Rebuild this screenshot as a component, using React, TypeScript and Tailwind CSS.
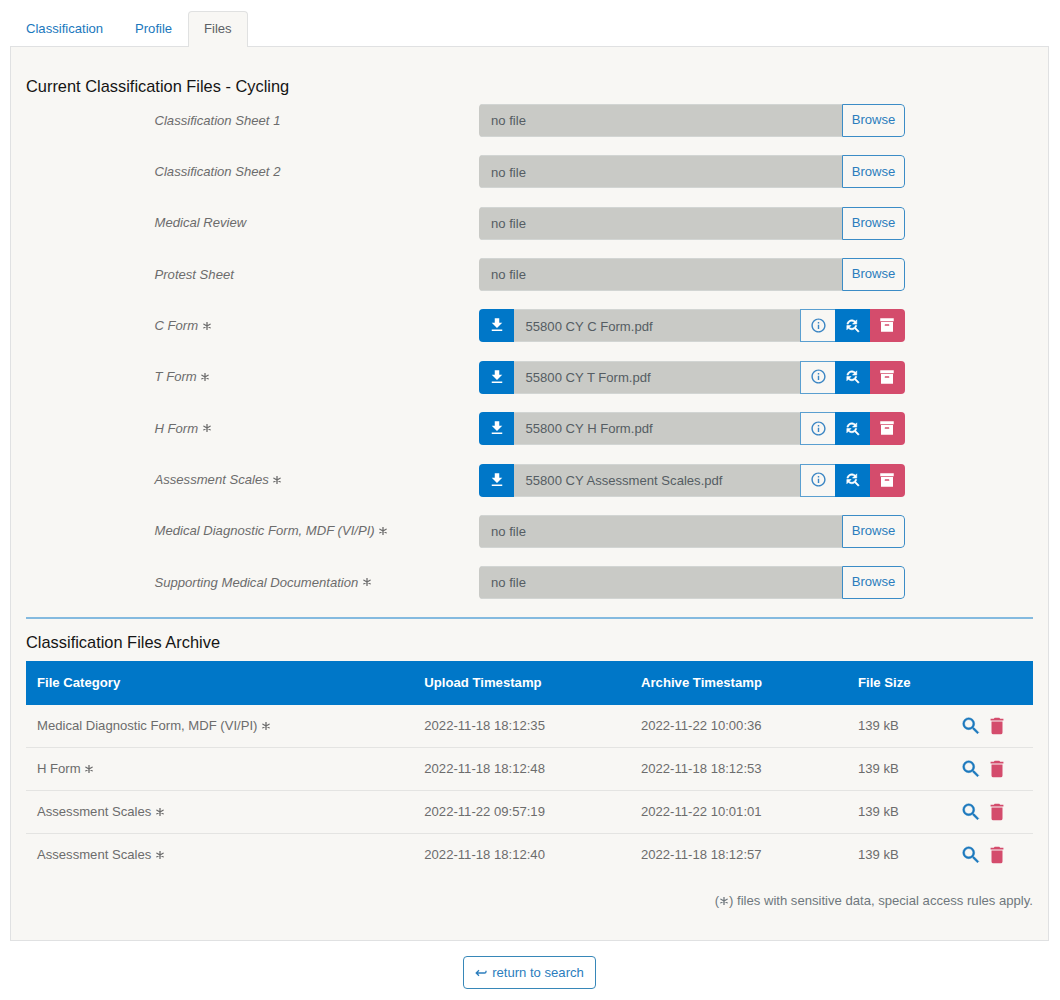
import React from "react";

const paths = {
  download: "M5 20h14v-2H5v2zM19 9h-4V3H9v6H5l7 7 7-7z",
  info: "M11 7h2v2h-2V7zm0 4h2v6h-2v-6zm1-9C6.48 2 2 6.48 2 12s4.48 10 10 10 10-4.48 10-10S17.52 2 12 2zm0 18c-4.41 0-8-3.59-8-8s3.59-8 8-8 8 3.59 8 8-3.59 8-8 8z",
  replace:
    "M11 6c1.38 0 2.63.56 3.54 1.46L12 10h6V4l-2.05 2.05C14.68 4.78 12.93 4 11 4c-3.53 0-6.43 2.61-6.92 6H6.1c.46-2.28 2.48-4 4.9-4zm5.64 9.14c.66-.9 1.12-1.97 1.28-3.14H15.9c-.46 2.28-2.48 4-4.9 4-1.38 0-2.63-.56-3.54-1.46L10 12H4v6l2.05-2.05C7.32 17.22 9.07 18 11 18c1.55 0 2.98-.51 4.14-1.36L20 21.49 21.49 20l-4.85-4.86z",
  archive:
    "M3 3h18v4H3V3zm1 5h16v13H4V8zm5.500 3a.5.5 0 0 0-.5.5V13h6v-1.500a.5.5 0 0 0-.5-.5h-5z",
  search:
    "M9.500 3A6.500 6.500 0 0 1 16 9.500c0 1.610-.59 3.090-1.560 4.230l.27.27h.79l5 5-1.500 1.500-5-5v-.79l-.27-.27A6.516 6.516 0 0 1 9.500 16 6.500 6.500 0 0 1 3 9.500 6.500 6.500 0 0 1 9.500 3m0 2C7 5 5 7 5 9.500S7 14 9.500 14 14 12 14 9.500 12 5 9.500 5z",
  trash: "M19 4h-3.500l-1-1h-5l-1 1H5v2h14M6 19a2 2 0 0 0 2 2h8a2 2 0 0 0 2-2V7H6v12z",
};

function Icon({ name, className }: { name: keyof typeof paths; className: string }) {
  return (
    <svg viewBox="0 0 24 24" fill="currentColor" className={className}>
      <path d={paths[name]} />
    </svg>
  );
}

function Star({ className = "ml-[4.500px]" }: { className?: string }) {
  return (
    <svg
      viewBox="0 0 8 8"
      className={`inline-block h-2 w-2 align-[0.500px] ${className}`}
      stroke="currentColor"
      strokeWidth="1.300"
      strokeLinecap="round"
    >
      <path d="M4 .4v7.200M.9 2.200l6.200 3.600M7.100 2.200.9 5.800" />
    </svg>
  );
}

const files: { label: string; sensitive?: boolean; file?: string }[] = [
  { label: "Classification Sheet 1" },
  { label: "Classification Sheet 2" },
  { label: "Medical Review" },
  { label: "Protest Sheet" },
  { label: "C Form", sensitive: true, file: "55800 CY C Form.pdf" },
  { label: "T Form", sensitive: true, file: "55800 CY T Form.pdf" },
  { label: "H Form", sensitive: true, file: "55800 CY H Form.pdf" },
  { label: "Assessment Scales", sensitive: true, file: "55800 CY Assessment Scales.pdf" },
  { label: "Medical Diagnostic Form, MDF (VI/PI)", sensitive: true },
  { label: "Supporting Medical Documentation", sensitive: true },
];

const archive = [
  ["Medical Diagnostic Form, MDF (VI/PI)", "2022-11-18 18:12:35", "2022-11-22 10:00:36", "139 kB"],
  ["H Form", "2022-11-18 18:12:48", "2022-11-18 18:12:53", "139 kB"],
  ["Assessment Scales", "2022-11-22 09:57:19", "2022-11-22 10:01:01", "139 kB"],
  ["Assessment Scales", "2022-11-18 18:12:40", "2022-11-18 18:12:57", "139 kB"],
];

const columns = "grid grid-cols-[387.300px_216.700px_217px_102px_1fr] items-center pl-[11px]";

function FileRow({ label, sensitive, file }: (typeof files)[number]) {
  return (
    <div className="flex h-[51.360px] items-start pl-[128.500px]">
      <div className="w-[324.500px] pt-[6.600px] text-[13.100px] italic leading-5 text-[#6c6c6c]">
        {label}
        {sensitive && <Star />}
      </div>
      <div className="flex h-[33px] w-[426px] overflow-hidden rounded">
        {file && (
          <button className="flex w-[35px] items-center justify-center bg-[#0077c8] pb-px text-white">
            <Icon name="download" className="h-[18px] w-[18px]" />
          </button>
        )}
        <div
          className={`flex flex-1 items-center border-y border-[#d2d5d3] bg-[#c9cac6] pt-px text-[13.100px] text-[#555d63] ${file ? "pl-[11.500px]" : "pl-3"}`}
        >
          {file ?? "no file"}
        </div>
        {file ? (
          <>
            <button className="flex w-[35px] items-center justify-center border border-r-0 border-[#5a9fd0] pb-px text-[#3b86c4]">
              <Icon name="info" className="h-[17px] w-[17px]" />
            </button>
            <button className="flex w-[35px] items-center justify-center bg-[#0077c8] pb-px text-white">
              <Icon
                name="replace"
                className="h-[17px] w-[17px] stroke-current stroke-[0.8px]"
              />
            </button>
            <button className="flex w-[35px] items-center justify-center bg-[#d44c6c] pb-px pr-px text-white">
              <Icon name="archive" className="h-[18px] w-[18px]" />
            </button>
          </>
        ) : (
          <button className="flex w-[63px] items-center justify-center rounded-r border border-[#3b8cc6] pb-px text-[13.100px] text-[#2b7dbd]">
            Browse
          </button>
        )}
      </div>
    </div>
  );
}

export default function App() {
  return (
    <div className="h-[1000px] overflow-hidden bg-white px-[10px] pt-[11px] font-['Liberation_Sans',Arial,sans-serif] text-[13.100px] text-[#6c6c6c]">
      <nav className="relative z-10 flex h-9 text-[#1b78bd]">
        <a className="w-[109px] pl-4 pt-2 leading-5">Classification</a>
        <a className="w-[69px] pl-4 pt-2 leading-5">Profile</a>
        <a className="h-9 w-[60px] rounded-t border border-b-0 border-[#e0e1e1] bg-[#f8f7f4] pl-[15px] pt-[7px] leading-5 text-[#5c6166]">
          Files
        </a>
      </nav>
      <main className="-mt-px h-[895px] w-[1039px] border border-[#e0e1e2] bg-[#f8f7f4] px-[15px]">
        <h2 className="h-[57px] pt-[27px] text-[16.400px] leading-6 text-[#151515]">
          Current Classification Files - Cycling
        </h2>
        <section className="h-[513px]">
          {files.map((f) => (
            <FileRow key={f.label} {...f} />
          ))}
        </section>
        <hr className="h-[2px] border-0 bg-[#84badf]" />
        <h2 className="h-[42px] pt-[11px] text-[16.400px] leading-6 text-[#151515]">
          Classification Files Archive
        </h2>
        <div>
          <div className={`${columns} h-[44px] bg-[#0077c8] pb-px text-[13.150px] font-bold text-white`}>
            <span>File Category</span>
            <span>Upload Timestamp</span>
            <span>Archive Timestamp</span>
            <span>File Size</span>
          </div>
          {archive.map((row, i) => (
            <div
              key={i}
              className={`${columns} h-[43px] border-b ${i < 3 ? "border-[#e4e4e2]" : "border-transparent"}`}
            >
              <span>
                {row[0]}
                <Star />
              </span>
              <span>{row[1]}</span>
              <span>{row[2]}</span>
              <span>{row[3]}</span>
              <span className="flex gap-1">
                <Icon
                  name="search"
                  className="h-[22px] w-[22px] stroke-current stroke-[0.5px] text-[#1b78bd]"
                />
                <Icon name="trash" className="h-[22px] w-[22px] text-[#d44c6c]" />
              </span>
            </div>
          ))}
        </div>
        <p className="pt-[14px] text-right leading-5 text-[#6f777d]">
          (<Star className="mx-px" />) files with sensitive data, special access rules apply.
        </p>
      </main>
      <div className="flex pl-[453px] pt-[15px]">
        <button className="flex h-[33px] w-[133px] items-center justify-center gap-[5px] rounded border border-[#3787b8] text-[#2b7dbd]">
          <svg
            viewBox="0 0 12 10"
            className="h-[10px] w-3"
            fill="none"
            stroke="currentColor"
            strokeWidth="1.300"
          >
            <path d="M4 2.200 1.200 5 4 7.800M1.200 5h8.300c1 0 1.500-.5 1.500-1.300V2.800" />
          </svg>
          return to search
        </button>
      </div>
    </div>
  );
}
